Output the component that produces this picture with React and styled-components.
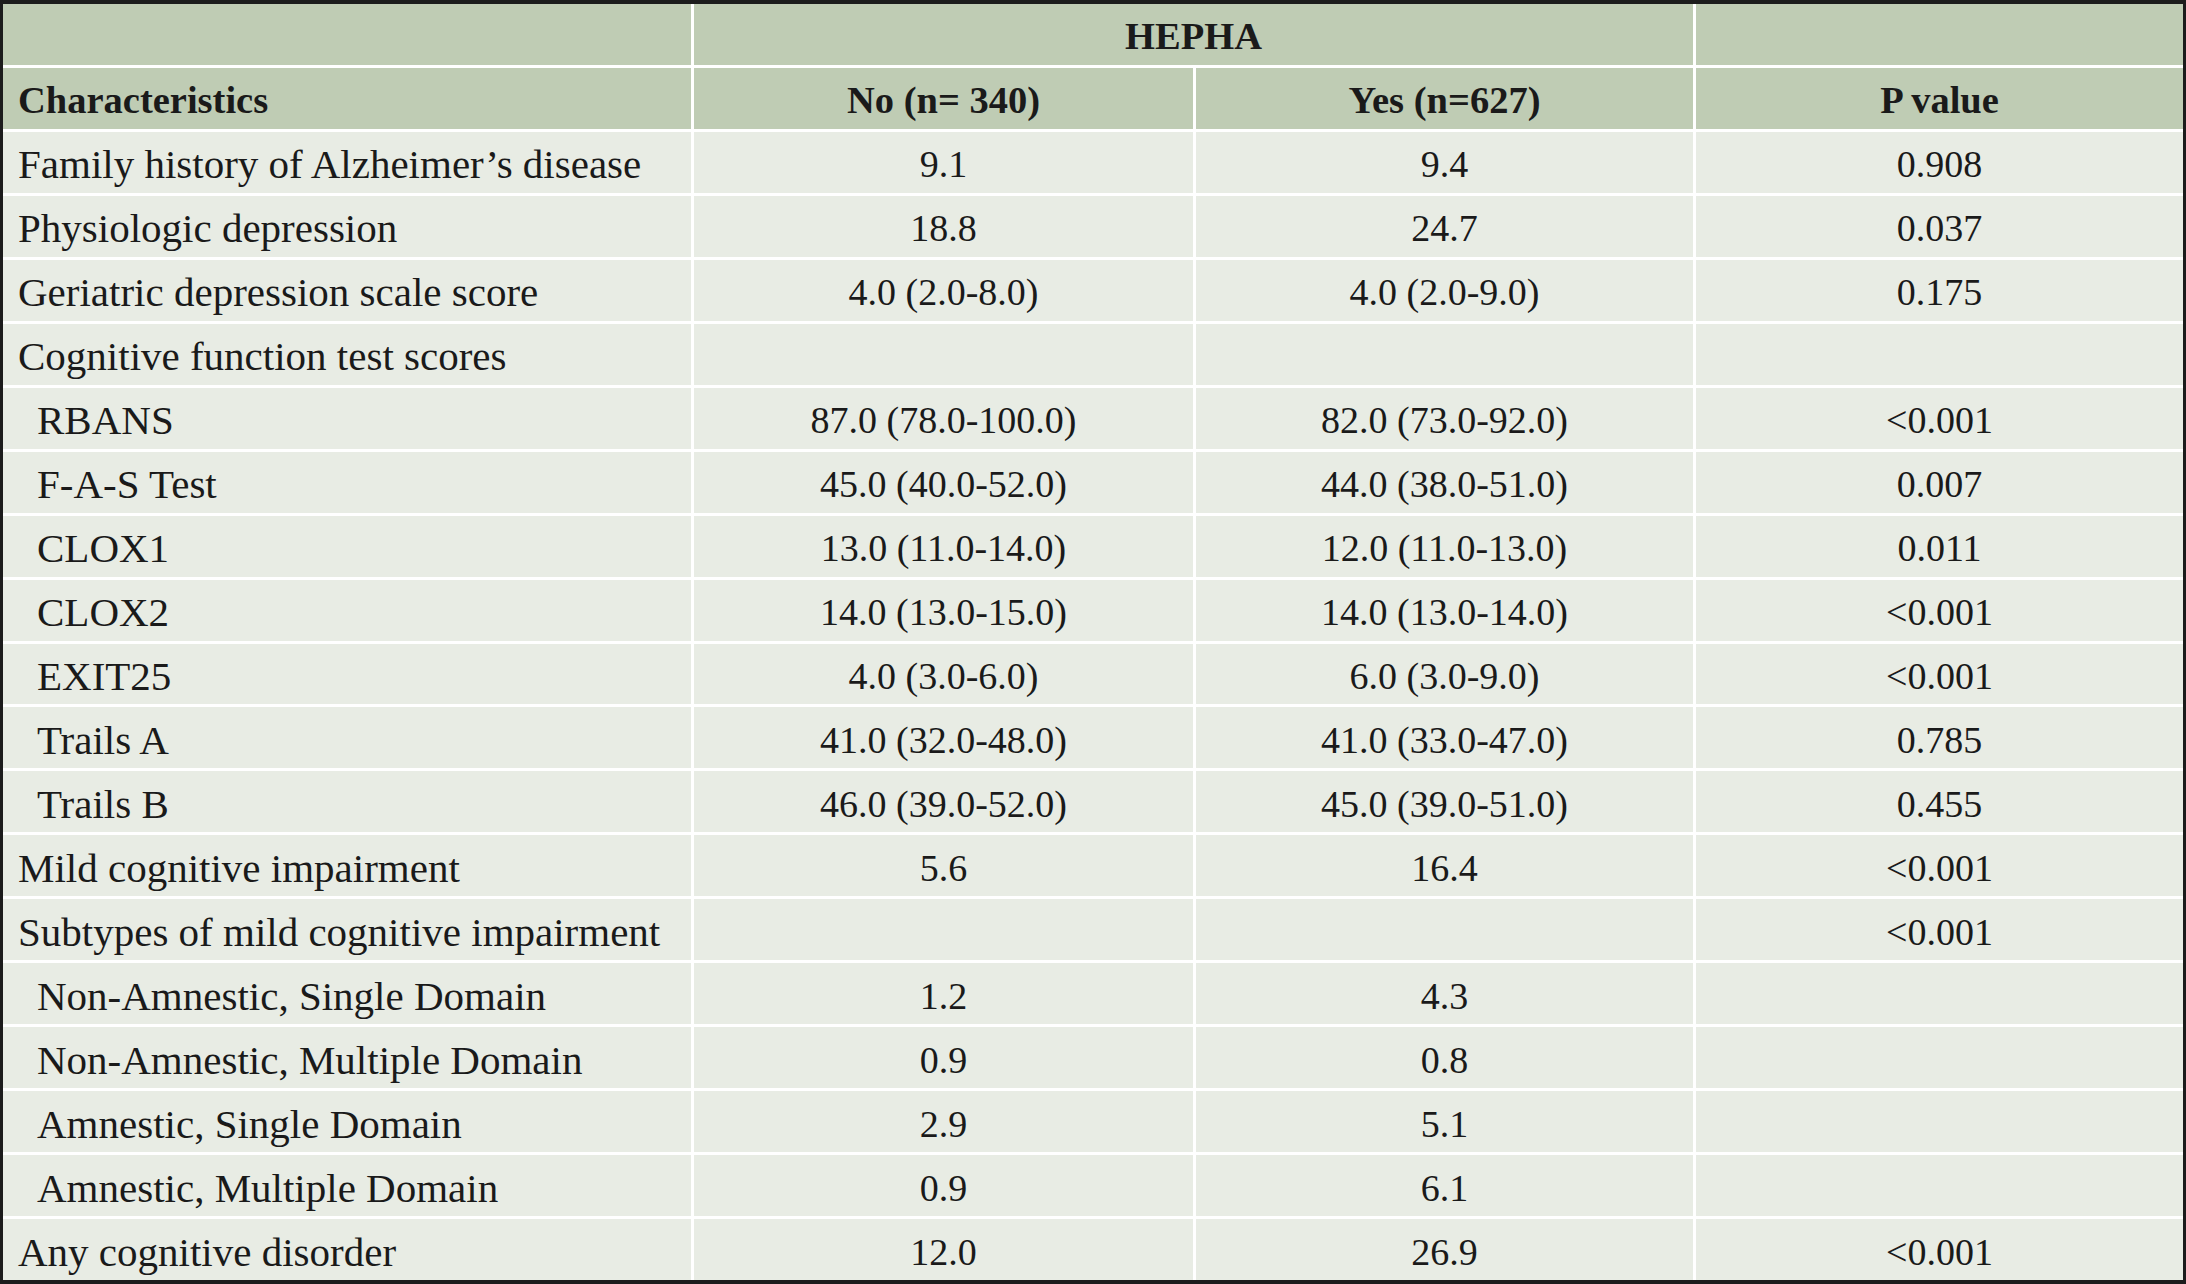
import React from 'react'
import styled, { createGlobalStyle } from 'styled-components'

const GlobalStyle = createGlobalStyle`
    html, body {
        margin: 0;
        padding: 0;
        background: #ffffff;
        overflow: hidden;
    }
`

const Table = styled.div`
    box-sizing: border-box;
    width: 2186px;
    height: 1284px;
    display: grid;
    grid-template-columns: 688px 499px 497px 1fr;
    grid-template-rows: repeat(20, 1fr);
    gap: 3px;
    background: #ffffff;
    border-style: solid;
    border-color: #1c1c1c;
    border-width: 4px 3px 4px 3px;
    font-family: "Liberation Serif", "Times New Roman", serif;
    color: #1a1a1a;
`

const HeadCell = styled.div`
    display: flex;
    align-items: center;
    justify-content: ${({ $align }) => $align === 'left' ? 'flex-start' : 'center'};
    grid-column: ${({ $span }) => $span ? `span ${$span}` : 'auto'};
    padding: 4px 0 0 ${({ $align }) => $align === 'left' ? '15px' : '0'};
    background: #bfccb4;
    font-size: 38.5px;
    font-weight: 700;
    white-space: nowrap;
`

const Cell = styled.div`
    display: flex;
    align-items: center;
    justify-content: ${({ $align }) => $align === 'left' ? 'flex-start' : 'center'};
    padding: 4px 0 0 ${({ $align, $indent }) => $align === 'left' ? ($indent ? '34px' : '15px') : '0'};
    background: #e8ece4;
    font-size: ${({ $align }) => $align === 'left' ? '41px' : '38px'};
    white-space: nowrap;
`

const rows = [
    ['Family history of Alzheimer\u2019s disease', '9.1', '9.4', '0.908'],
    ['Physiologic depression', '18.8', '24.7', '0.037'],
    ['Geriatric depression scale score', '4.0 (2.0-8.0)', '4.0 (2.0-9.0)', '0.175'],
    ['Cognitive function test scores', '', '', ''],
    ['RBANS', '87.0 (78.0-100.0)', '82.0 (73.0-92.0)', '<0.001', true],
    ['F-A-S Test', '45.0 (40.0-52.0)', '44.0 (38.0-51.0)', '0.007', true],
    ['CLOX1', '13.0 (11.0-14.0)', '12.0 (11.0-13.0)', '0.011', true],
    ['CLOX2', '14.0 (13.0-15.0)', '14.0 (13.0-14.0)', '<0.001', true],
    ['EXIT25', '4.0 (3.0-6.0)', '6.0 (3.0-9.0)', '<0.001', true],
    ['Trails A', '41.0 (32.0-48.0)', '41.0 (33.0-47.0)', '0.785', true],
    ['Trails B', '46.0 (39.0-52.0)', '45.0 (39.0-51.0)', '0.455', true],
    ['Mild cognitive impairment', '5.6', '16.4', '<0.001'],
    ['Subtypes of mild cognitive impairment', '', '', '<0.001'],
    ['Non-Amnestic, Single Domain', '1.2', '4.3', '', true],
    ['Non-Amnestic, Multiple Domain', '0.9', '0.8', '', true],
    ['Amnestic, Single Domain', '2.9', '5.1', '', true],
    ['Amnestic, Multiple Domain', '0.9', '6.1', '', true],
    ['Any cognitive disorder', '12.0', '26.9', '<0.001'],
]

export default function App() {
    return <>
        <GlobalStyle />
        <Table>
            <HeadCell />
            <HeadCell $span={2}>HEPHA</HeadCell>
            <HeadCell />

            <HeadCell $align="left">Characteristics</HeadCell>
            <HeadCell>No (n= 340)</HeadCell>
            <HeadCell>Yes (n=627)</HeadCell>
            <HeadCell>P value</HeadCell>

            {rows.map(([label, no, yes, p, sub]) => (
                <React.Fragment key={label}>
                    <Cell $align="left" $indent={sub}>{label}</Cell>
                    <Cell>{no}</Cell>
                    <Cell>{yes}</Cell>
                    <Cell>{p}</Cell>
                </React.Fragment>
            ))}
        </Table>
    </>
}
